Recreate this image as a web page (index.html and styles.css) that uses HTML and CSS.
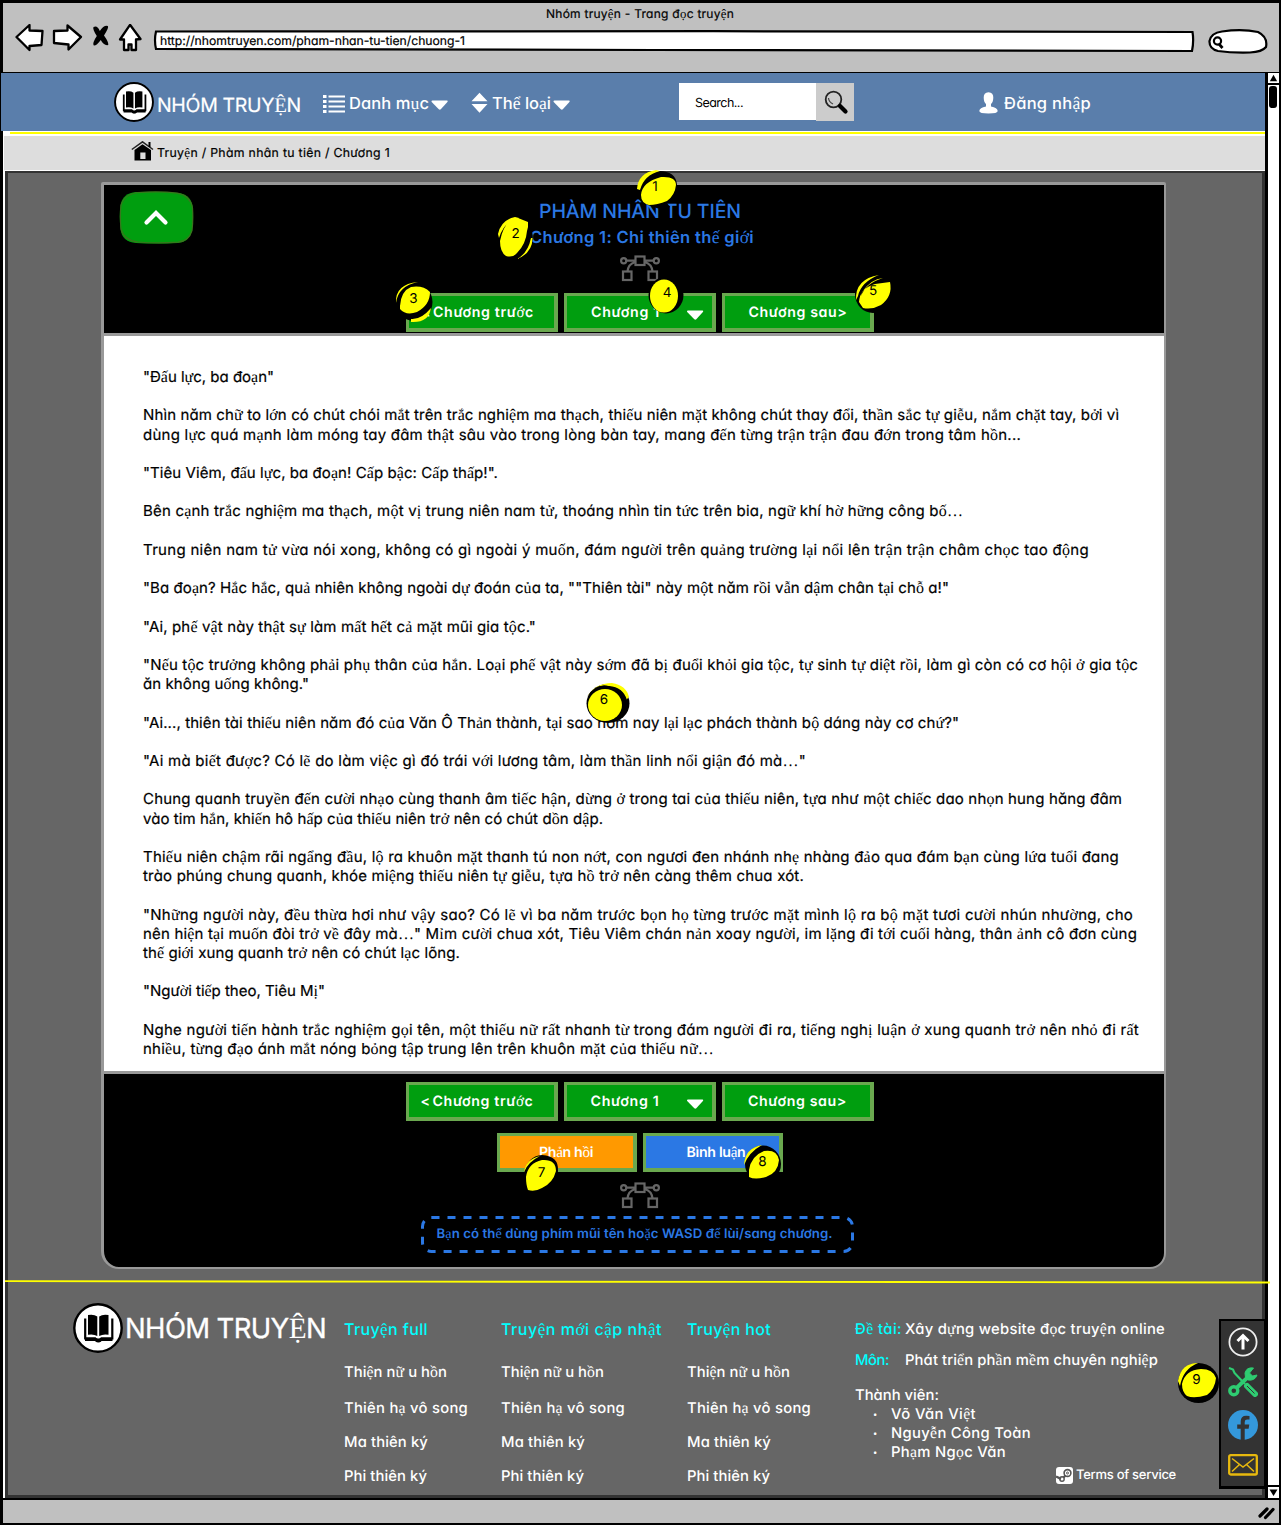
FILE: index.html
```html
<!DOCTYPE html>
<html lang="vi">
<head>
<meta charset="utf-8">
<title>Nhóm truyện - Trang đọc truyện</title>
<link rel="stylesheet" href="styles.css">
</head>
<body>
<svg class="defs" aria-hidden="true">
  <symbol id="book" viewBox="0 0 50 50"><circle cx="25" cy="25" r="23.7" fill="#fff" stroke="#000" stroke-width="2.4"/><path d="M15 12q6-1 9.3 1.4V33q-4-2.300-9.300-1.200zM35.500 12q-6-1-9.300 1.400V33q4-2.300 9.300-1.200z"/><path d="M12.200 15.500V35.500H22q1 2.500 3.300 2.500t3.300-2.500H39.300V15.500" fill="none" stroke="#000" stroke-width="2.200"/><path d="M12 34.500h10.500q2.800 2.200 5.600 0H39.500v3.500H28.500q-3.200 3-6.300 0H12z"/></symbol>
  <symbol id="bezier" viewBox="0 0 40 27"><g fill="none" stroke="#666" stroke-width="2.200"><rect x="15.500" y="1.500" width="9" height="8.500"/><rect x="3" y="16.500" width="8.500" height="8.500"/><rect x="28.500" y="16.500" width="8.500" height="8.500"/><circle cx="3.700" cy="5.700" r="2.600"/><circle cx="36.300" cy="5.700" r="2.600"/><path d="M6.500 5.700h9M24.500 5.700h9M15.500 7Q8 9 7.500 16.500M24.500 7Q32 9 32.500 16.500"/></g></symbol>
  <symbol id="caret" viewBox="0 0 17 10"><path d="M1.500.5H16q1.200.3.400 1.500L9.800 9.200q-1 .9-2 0L.7 2Q0 .8 1.500.5z" fill="#fff"/></symbol>
</svg>

<div class="window">
  <header class="chrome">
    <div class="chrome-title"><span data-w="188">Nhóm truyện - Trang đọc truyện</span></div>
    <div class="chrome-bar">
      <svg class="chrome-icons" viewBox="0 0 128 30" width="128" height="30"><g fill="#fff" stroke="#000" stroke-width="2.300" stroke-linejoin="round"><path d="M1.500 13 14.500 1v5.500l13 .5-1 14-12 1v4z"/><path d="M39 7l13.500-.5V1.500L66 13 53.500 25.500V20.500L39 19z"/><path d="M115 .8 125.500 15l-4.500.5V26h-4.500v-5.500h-3V26h-4.500V15.500h-4z"/></g><path d="M78.500 3q4-2 6.300 4 4-6 8-5 1.500 1-3.800 9.500 5 7 4.300 9.500-4.500 1-7.500-5-4.500 6-7 5.500-2-2 3-9.500-4.500-7-3.300-9z"/></svg>
      <div class="url"><svg class="url-frame" viewBox="0 0 1042 23" preserveAspectRatio="none"><path d="M3 1.500 560 1.200 1039.500 2Q1041 11 1039 21L500 20 3 19Q1 10 3 1.500z" fill="#fff" stroke="#000" stroke-width="2.200"/></svg><span data-w="305">http://nhomtruyen.com/pham-nhan-tu-tien/chuong-1</span></div>
      <svg class="chrome-search" viewBox="0 0 60 26" width="60" height="26"><path d="M14 2.500Q34-.5 50 3q10 5 8 15-4 5-16 5.500-18 .5-32-1.500Q1 20 1.500 12 3 4 14 2.500z" fill="#fff" stroke="#000" stroke-width="2.200"/><circle cx="9.500" cy="12" r="3.600" fill="none" stroke="#000" stroke-width="2.200"/><path d="M11 15l3.500 4" stroke="#000" stroke-width="2.800"/></svg>
    </div>
  </header>

  <div class="viewport">
    <main class="page">
      <nav class="nav">
        <svg class="nav-logo" width="40" height="40" preserveAspectRatio="none"><use href="#book"/></svg>
        <span class="brand" data-w="144">NHÓM TRUYỆN</span>
        <svg class="nav-list" width="22" height="20" viewBox="0 0 22 20"><path d="M0 2.500h3.500M0 7.500h3.500M0 12.500h3.500M0 17.500h3.500" stroke="#fff" stroke-width="3"/><path d="M5.500 2.500H22M5.500 7.500H22M5.500 12.500H22M5.500 17.500H22" stroke="#fff" stroke-width="1.800"/></svg>
        <span class="nav-link" data-w="80">Danh mục</span>
        <svg class="nav-caret" width="17" height="10"><use href="#caret"/></svg>
        <svg class="nav-sort" width="17" height="22" viewBox="0 0 17 22"><path d="M8.500.8 16.500 9.300H.5zM.5 12h16L8.500 20.700z" fill="#fff"/></svg>
        <span class="nav-link" data-w="59">Thể loại</span>
        <svg class="nav-caret" width="17" height="10"><use href="#caret"/></svg>
        <div class="search"><span data-w="48">Search...</span></div>
        <div class="search-btn"><svg width="26" height="26" viewBox="0 0 26 26"><circle cx="10.500" cy="10.500" r="7.800" fill="#ccc" stroke="#222" stroke-width="1.800"/><path d="M5.500 9q.3 4 4.500 6" fill="none" stroke="#444" stroke-width="1.200"/><path d="M17 17l5.500 5.500" stroke="#000" stroke-width="4.200" stroke-linecap="round"/></svg></div>
        <svg class="nav-user" width="19" height="22" viewBox="0 0 19 22"><path d="M9.500.3q5 .2 4.800 5.500-.2 4.700-2.300 6.200v2.500q6.500 1.300 6.700 4.500 0 2.500-9.200 2.500T.3 19q.2-3.200 6.700-4.500V12Q4.900 10.500 4.700 5.800 4.500.5 9.500.3z" fill="#fff"/></svg>
        <span class="nav-link" data-w="87">Đăng nhập</span>
      </nav>
      <div class="rule"></div>
      <div class="crumbs">
        <svg width="23" height="20" viewBox="0 0 23 20"><path d="M3.500 9 11.500 3.200 20 9v10.500H3.500z"/><path d="M9.300 11.500h5.200v6.500H9.300z" fill="#ddd"/><path d="M.8 8.500 11.500.8 22 8.500" fill="none" stroke="#222" stroke-width="1.500"/><path d="M18.500 1v5" stroke="#000" stroke-width="2"/></svg>
        <span data-w="233">Truyện / Phàm nhân tu tiên / Chương 1</span>
      </div>

      <div class="body">
        <section class="reader">
          <div class="head">
            <svg class="up" width="75" height="53" viewBox="0 0 75 53"><path d="M17 1Q38 0 60 2 73 4 74 18q.5 12-1 22-3 11-14 12-24 1-42 0Q3 51 1.500 38 0 24 1.500 14 4 2 17 1z" fill="#009e0f"/><path d="M20 1.500q22-1.500 38 .7 13 2 15.500 14.800.8 12-.5 22.500-3 10.500-14 11.700-21 1.500-40-.2Q5 49.500 2 38 .8 25 2 14.500 5 3 20 1.500z" fill="none" stroke="#38761d" stroke-width="1.200"/><path d="M27.500 31.500 37 22l9.500 9.500" fill="none" stroke="#fff" stroke-width="4.200" stroke-linecap="round"/></svg>
            <div class="titles">
              <h1><span data-w="202">PHÀM NHÂN TU TIÊN</span></h1>
              <h2><span data-w="224">Chương 1: Chi thiên thế giới</span></h2>
              <svg class="deco" width="40" height="27"><use href="#bezier"/></svg>
              <div class="buttons">
                <a class="btn prev"><span data-w="11">&lt;</span><span data-w="101">Chương trước</span></a>
                <a class="btn pick"><span data-w="69">Chương 1</span><svg width="18" height="10"><use href="#caret"/></svg></a>
                <a class="btn next"><span data-w="99">Chương sau&gt;</span></a>
              </div>
            </div>
          </div>
          <article class="text">
            <p><span data-w="131">"Đấu lực, ba đoạn"</span></p>
            <p><span data-w="976">Nhìn năm chữ to lớn có chút chói mắt trên trắc nghiệm ma thạch, thiếu niên mặt không chút thay đổi, thần sắc tự giễu, nắm chặt tay, bởi vì</span><br><span data-w="878">dùng lực quá mạnh làm móng tay đâm thật sâu vào trong lòng bàn tay, mang đến từng trận trận đau đớn trong tâm hồn...</span></p>
            <p><span data-w="355">"Tiêu Viêm, đấu lực, ba đoạn! Cấp bậc: Cấp thấp!".</span></p>
            <p><span data-w="820">Bên cạnh trắc nghiệm ma thạch, một vị trung niên nam tử, thoáng nhìn tin tức trên bia, ngữ khí hờ hững công bố…</span></p>
            <p><span data-w="946">Trung niên nam tử vừa nói xong, không có gì ngoài ý muốn, đám người trên quảng trường lại nổi lên trận trận châm chọc tao động</span></p>
            <p><span data-w="806">"Ba đoạn? Hắc hắc, quả nhiên không ngoài dự đoán của ta, ""Thiên tài" này một năm rồi vẫn dậm chân tại chỗ a!"</span></p>
            <p><span data-w="393">"Ai, phế vật này thật sự làm mất hết cả mặt mũi gia tộc."</span></p>
            <p><span data-w="995">"Nếu tộc trưởng không phải phụ thân của hắn. Loại phế vật này sớm đã bị đuổi khỏi gia tộc, tự sinh tự diệt rồi, làm gì còn có cơ hội ở gia tộc</span><br><span data-w="166">ăn không uống không."</span></p>
            <p><span data-w="816">"Ai..., thiên tài thiếu niên năm đó của Văn Ô Thản thành, tại sao hôm nay lại lạc phách thành bộ dáng này cơ chứ?"</span></p>
            <p><span data-w="663">"Ai mà biết được? Có lẽ do làm việc gì đó trái với lương tâm, làm thần linh nổi giận đó mà…"</span></p>
            <p><span data-w="979">Chung quanh truyền đến cười nhạo cùng thanh âm tiếc hận, dừng ở trong tai của thiếu niên, tựa như một chiếc dao nhọn hung hăng đâm</span><br><span data-w="460">vào tim hắn, khiến hô hấp của thiếu niên trở nên có chút dồn dập.</span></p>
            <p><span data-w="976">Thiếu niên chậm rãi ngẩng đầu, lộ ra khuôn mặt thanh tú non nớt, con ngươi đen nhánh nhẹ nhàng đảo qua đám bạn cùng lứa tuổi đang</span><br><span data-w="661">trào phúng chung quanh, khóe miệng thiếu niên tự giễu, tựa hồ trở nên càng thêm chua xót.</span></p>
            <p><span data-w="990">"Những người này, đều thừa hơi như vậy sao? Có lẽ vì ba năm trước bọn họ từng trước mặt mình lộ ra bộ mặt tươi cười nhún nhường, cho</span><br><span data-w="994">nên hiện tại muốn đòi trở về đây mà…" Mỉm cười chua xót, Tiêu Viêm chán nản xoay người, im lặng đi tới cuối hàng, thân ảnh cô đơn cùng</span><br><span data-w="317">thế giới xung quanh trở nên có chút lạc lõng.</span></p>
            <p><span data-w="182">"Người tiếp theo, Tiêu Mị"</span></p>
            <p><span data-w="996">Nghe người tiến hành trắc nghiệm gọi tên, một thiếu nữ rất nhanh từ trong đám người đi ra, tiếng nghị luận ở xung quanh trở nên nhỏ đi rất</span><br><span data-w="571">nhiều, từng đạo ánh mắt nóng bỏng tập trung lên trên khuôn mặt của thiếu nữ…</span></p>
          </article>
          <div class="foot">
            <div class="buttons">
              <a class="btn prev"><span data-w="11">&lt;</span><span data-w="101">Chương trước</span></a>
              <a class="btn pick"><span data-w="69">Chương 1</span><svg width="18" height="10"><use href="#caret"/></svg></a>
              <a class="btn next"><span data-w="99">Chương sau&gt;</span></a>
            </div>
            <div class="buttons second">
              <a class="btn report"><span data-w="54">Phản hồi</span></a>
              <a class="btn comment"><span data-w="59">Bình luận</span></a>
            </div>
            <svg class="deco" width="40" height="27"><use href="#bezier"/></svg>
            <div class="hint"><svg class="hint-frame" viewBox="0 0 433 37" width="433" height="37"><rect x="1.500" y="1.500" width="430" height="34" rx="9" fill="none" stroke="#2b78e4" stroke-width="3" stroke-dasharray="8 8"/></svg><span data-w="396">Bạn có thể dùng phím mũi tên hoặc WASD để lùi/sang chương.</span></div>
          </div>
        </section>

        <svg class="footline" viewBox="0 0 1265 4" width="1265" height="4"><path d="M0 1.200 400 1.700 900 2 1265 2.500" stroke="#ff0" stroke-width="1.800" fill="none"/></svg>
        <footer class="footer">
          <div class="f-brand"><svg width="50" height="50"><use href="#book"/></svg><span data-w="201">NHÓM TRUYỆN</span></div>
          <ul class="col c1"><li><b data-w="84">Truyện full</b></li><li><span data-w="103">Thiện nữ u hồn</span></li><li><span data-w="124">Thiên hạ vô song</span></li><li><span data-w="84">Ma thiên ký</span></li><li><span data-w="83">Phi thiên ký</span></li></ul>
          <ul class="col c2"><li><b data-w="161">Truyện mới cập nhật</b></li><li><span data-w="103">Thiện nữ u hồn</span></li><li><span data-w="124">Thiên hạ vô song</span></li><li><span data-w="84">Ma thiên ký</span></li><li><span data-w="83">Phi thiên ký</span></li></ul>
          <ul class="col c3"><li><b data-w="84">Truyện hot</b></li><li><span data-w="103">Thiện nữ u hồn</span></li><li><span data-w="124">Thiên hạ vô song</span></li><li><span data-w="84">Ma thiên ký</span></li><li><span data-w="83">Phi thiên ký</span></li></ul>
          <div class="about">
            <div class="line"><b><span data-w="47">Đề tài:</span></b><span data-w="260">Xây dựng website đọc truyện online</span></div>
            <div class="line"><b><span data-w="34">Môn:</span></b><span data-w="253">Phát triển phần mềm chuyên nghiệp</span></div>
            <div class="members"><span data-w="84">Thành viên:</span>
              <ul><li><span data-w="85">Võ Văn Việt</span></li><li><span data-w="140">Nguyễn Công Toàn</span></li><li><span data-w="115">Phạm Ngọc Văn</span></li></ul>
            </div>
            <div class="terms"><svg width="17" height="17" viewBox="0 0 17 17"><rect width="17" height="17" rx="3" fill="#fff"/><g fill="none" stroke="#555"><circle cx="11.500" cy="6" r="3.400" stroke-width="1.600"/><circle cx="11.500" cy="6" r="1" stroke-width="1"/><circle cx="6" cy="12" r="2.200" stroke-width="1.400"/><path d="M0 9.500l5 2.300M7.500 10.500l2-2" stroke-width="2.400"/></g></svg><span data-w="100">Terms of service</span></div>
          </div>
        </footer>
      </div>
    </main>
    <div class="scroll">
      <svg class="arrow" width="11" height="11" viewBox="0 0 11 11"><path d="M5.500 2 9.500 9H1.500z"/></svg>
      <div class="thumb"></div>
      <svg class="arrow last" width="11" height="11" viewBox="0 0 11 11"><path d="M5.500 9 9.500 2.500H1.500z"/></svg>
    </div>
  </div>
  <div class="status"><svg width="17" height="14" viewBox="0 0 17 14"><path d="M2 10 9 3M7.500 11.500 15 3.500" stroke="#000" stroke-width="3.200" stroke-linecap="round"/></svg></div>
</div>

<aside class="tools">
  <svg width="30" height="30" viewBox="0 0 30 30"><circle cx="15" cy="15" r="13.600" fill="none" stroke="#eee" stroke-width="1.800"/><path d="M15 22.500V9M9.500 14 15 8.500 20.500 14" fill="none" stroke="#fff" stroke-width="3"/></svg>
  <svg width="30" height="30" viewBox="0 0 30 30" fill="none" stroke="#2ecc71"><path d="M1 1l4 1.500 1.500 3.500L17 17" stroke-width="2.200"/><path d="M19 19l8 8" stroke-width="6" stroke-linecap="round"/><path d="M19 19l7.500 7.500" stroke="#333" stroke-width="1"/><circle cx="5.800" cy="23.800" r="4" stroke-width="3.400"/><path d="M9 20.500 19 11" stroke-width="3.800"/><path d="M25.500 1q-7-1-8.500 5l.5 4.500L20 13q7 1 9-5l-4.500 1-3-3z" fill="#2ecc71" stroke-width="1"/></svg>
  <svg width="30" height="30" viewBox="0 0 30 30"><circle cx="15" cy="15" r="15" fill="#3498db"/><path d="M12.700 30V18.800H9.200v-4.300h3.500v-3.200q0-5.600 5.500-5.600 2 0 3.300.3v3.600h-2.300q-2.500 0-2.500 2.300v2.600h4.600l-.7 4.300h-3.900V30z" fill="#333"/></svg>
  <svg width="30" height="22" viewBox="0 0 30 22" fill="none" stroke="#e8b90e"><rect x="1.200" y="1.200" width="27.600" height="19.300" rx="1.500" stroke-width="2.300"/><path d="M4 4.500 15 13 26 4.500M4 17.500l7.500-7M26 17.500l-7.500-7" stroke-width="1.500"/></svg>
</aside>

<svg class="pins" viewBox="0 0 1281 1526" width="1281" height="1526">
  <g fill="#000">
    <path d="M638 190q2-17 21-19 17 0 18 14-1 10-10 18l3 4q-10 3-16 0-15-3-16-17z"/>
    <ellipse cx="515" cy="239" rx="17.500" ry="21" transform="rotate(15 515 239)"/>
    <ellipse cx="414" cy="302" rx="18.500" ry="19"/><ellipse cx="666" cy="295" rx="17.500" ry="18.500"/>
    <ellipse cx="873" cy="294" rx="18" ry="19"/><ellipse cx="608" cy="703.500" rx="21.500" ry="19.500"/>
    <path d="M524 1174q3-18 18-19 17 1 16 16-1 18-12 24-12 0-20-6-3-7-2-15z"/>
    <ellipse cx="763" cy="1164" rx="18" ry="18.500"/><ellipse cx="1198.500" cy="1383" rx="20.500" ry="20"/>
  </g>
  <g fill="#ff0">
    <path d="M637 189q1-16 19-19l4 1q-16 4-20 19zM641 195q1-13 20-18 15-1 15 8-1 10-9 16-10 4-18 4-8-2-8-10z"/>
    <path d="M498 234q3-14 17-17l4 1q-15 3-20 20zM500 241q4-21 18-23l10 4v5l-1 4q-1 13-10 22-4 5-11 3-6-4-6-15zM532.500 238q0 15-15.500 21 11-6 14-21z"/>
    <path d="M396 303q-1-19 22-21-20 4-22 21zM400 306q1-15 11-19 12-2 19 5 0 13-13 20-11 4-17-3zM411 319q10 1 20-11-2 15-20 14z"/>
    <ellipse cx="664" cy="296" rx="14" ry="16.500"/>
    <path d="M856 300q-1-21 23-25-18 7-21 21zM859 302q1-14 16-18l15-2q3 14-9 23-9 5-18 3zM861 296q5-13 22-18-12 1-21 14z"/>
    <path d="M587 697q8-14 25-14 14 2 17 14l-5 5-8-13q-18-10-29 8z"/>
    <path d="M587 697Q595 683 609 686q14 1 18 14l-5 9-7-18q-17-8-28 6z" fill="#000"/>
    <ellipse cx="605" cy="705" rx="17" ry="16"/>
    <path d="M524 1172q2-13 16-16-12 6-16 16zM526 1177q2-14 16-17 14-1 14 11-3 12-14 17-7 4-14 2-2-5-2-13z"/>
    <path d="M744 1165q1-17 18-20-13 7-18 20zM749 1170q2-14 15-19 13-2 15 9-1 13-13 17-11 3-17 0z"/>
    <path d="M1178 1381q3-18 20-18-15 6-18 23zM1182 1384q3-14 19-15 12 0 15 9-1 11-9 17-13 4-20 1-5-4-5-12z"/>
  </g>
  <g class="nums"><text x="655" y="191">1</text><text x="515.500" y="238">2</text><text x="413.500" y="303">3</text><text x="667" y="297">4</text><text x="873" y="295">5</text><text x="604" y="704">6</text><text x="541.500" y="1176.500">7</text><text x="762.500" y="1166">8</text><text x="1196.500" y="1383.500">9</text></g>
</svg>
<script src="fit.js"></script>
</body>
</html>
```
FILE: styles.css
```css
* { box-sizing: border-box; }
body { margin: 0; width: 1281px; height: 1526px; position: relative; overflow: hidden; background: #fff; color: #000; font-family: Inter, "Liberation Sans", sans-serif; font-feature-settings: "cv11" 1, "calt" 0; font-size: 15px; text-rendering: geometricPrecision; }
svg { display: block; flex: none; }
.defs { position: absolute; width: 0; height: 0; }
h1, h2, p, ul { margin: 0; padding: 0; }
ul { list-style: none; }
[data-w] { display: inline-block; white-space: nowrap; }
.alt { font-family: "Liberation Serif", serif; font-size: 1.067em; font-weight: 400; line-height: 0; }

.window { height: 1525px; display: flex; flex-direction: column; border: solid #000; border-width: 3px 2px 2px 3px; background: #fff; }
.chrome { height: 70px; background: #c0c0c0; border-bottom: 1px solid #000; flex: none; -webkit-text-stroke: .2px; }
.chrome-title { height: 21px; line-height: 21px; text-align: center; font-size: 12px; padding-right: 2px; }
.chrome-bar { display: flex; align-items: flex-start; padding-left: 12px; }
.url { position: relative; width: 1042px; height: 22px; margin: 6px 13px 0 10px; padding-left: 7px; line-height: 21px; font-size: 12.200px; }
.url-frame { position: absolute; left: 0; top: 0; width: 1042px; height: 23px; }
.url span { position: relative; }
.chrome-search { margin-top: 5px; }

.viewport { flex: 1; display: flex; min-height: 0; }
.page { flex: 1; display: flex; flex-direction: column; min-width: 0; padding-left: 2px; }
.nav, .rule, .crumbs { flex: none; }
.nav { height: 58px; margin-left: -4px; padding: 9px 0 0 113px; display: flex; background: #5a7eab; color: #fff; font-size: 16.500px; font-weight: 500; }
.nav > span { line-height: 43px; }
.nav .brand { font-size: 19.500px; font-weight: 400; -webkit-text-stroke: .2px; margin-left: 3px; line-height: 46px; }
.nav-list { margin: 12px 4px 0 22px; }
.nav-caret { margin: 18px 0 0 2px; }
.nav-sort { margin: 10px 4px 0 23px; }
.search { width: 137px; height: 37px; margin: 1px 0 0 109px; padding-left: 16px; background: #fff; color: #000; font-size: 12.500px; line-height: 41px; font-weight: 400; }
.search-btn { width: 38px; height: 38px; margin-top: 1px; background: #ccc; padding: 6px 0 0 7px; }
.nav-user { margin: 10px 6px 0 125px; }
.rule { height: 2px; margin-top: 1px; background: #ff0; margin-left: 5px; }
.crumbs { height: 34px; margin: 2px 0 1px -1px; background: #ddd; display: flex; padding: 5px 0 0 127px; font-size: 12.300px; line-height: 23px; -webkit-text-stroke: .2px; }
.crumbs > span { margin-left: 3px; }

.body { flex: 1; min-height: 0; background: #666; border: 3px solid #333; border-top-width: 2px; display: flex; flex-direction: column; }
.reader { flex: none; margin: 9px 0 0 93px; width: 1065px; height: 1087px; border: solid #999; border-width: 3px 2px 2px 3px; border-radius: 2px 2px 16px 18px; background: #000; display: flex; flex-direction: column; }
.head { height: 148px; display: flex; }
.up { margin: 6px 0 0 15px; }
.titles { width: 892px; display: flex; flex-direction: column; align-items: center; color: #2b78e4; }
h1 { font-size: 19.500px; line-height: 26px; margin-top: 13px; font-weight: 500; }
h2 { font-size: 16.500px; line-height: 26px; font-weight: 600; padding-left: 4px; }
.deco { margin-top: 5px; }
.buttons { display: flex; gap: 6px; margin-top: 11px; }
.btn { width: 152px; height: 39px; border: solid #6aa84f; border-width: 3px 4px 4px 3px; background: #009e0f; color: #fff; font-weight: 600; font-size: 14.200px; line-height: 34px; display: flex; justify-content: center; }
.prev { justify-content: flex-start; padding-left: 12px; }
.prev span + span { margin-left: 1px; }
.pick { justify-content: flex-start; padding-left: 24px; }
.pick svg { margin: 14px 0 0 26px; }
.next { padding-left: 1px; }
.text { height: 741px; background: #fff; border-top: 3px solid #999; border-bottom: 3px solid #999; padding: 31px 0 0 39px; font-size: 15px; -webkit-text-stroke: .2px; line-height: 19.200px; white-space: nowrap; }
.text p { margin-bottom: 19.200px; }
.text [data-w] { vertical-align: top; }
.foot { display: flex; flex-direction: column; align-items: center; padding-left: 11px; }
.foot .buttons { margin-top: 8px; }
.foot .second { margin-top: 12px; }
.second .btn { width: 140px; }
.second .report { background: #f90; }
.second .comment { background: #2b78e4; padding-left: 8px; }
.foot .deco { margin-top: 10px; }
.hint { position: relative; width: 433px; height: 37px; margin: 7px 5px 0 0; padding-left: 16px; line-height: 36px; color: #2b78e4; font-weight: 600; font-size: 13.200px; }
.hint-frame { position: absolute; left: 0; top: 0; }

.footline { margin: 11px 0 0 -3px; overflow: visible; position: relative; }
.footer { display: flex; color: #fff; font-weight: 500; font-size: 14.800px; }
.f-brand { width: 271px; margin: 19px 0 0 65px; display: flex; height: 50px; line-height: 50px; font-size: 27.500px; font-weight: 400; -webkit-text-stroke: .3px; }
.f-brand > span { margin-left: 2px; }
.col { padding-top: 32px; }
.col li { height: 34px; line-height: 26px; }
.col li:first-child { height: 43px; }
.col li:nth-child(2) { height: 36px; }
.col b, .about b { color: #0ff; font-weight: 500; }
.col b { font-size: 16px; }
.c1 { width: 157px; }
.c2 { width: 186px; }
.c3 { width: 168px; }
.about { padding-top: 34px; width: 330px; }
.line { display: flex; height: 31px; line-height: 22px; }
.line b { width: 50px; }
.members { line-height: 19.100px; margin-top: 6px; }
.members > span { display: block; }
.members li { padding-left: 36px; display: flex; }
.members li::before { content: "•"; font-size: 8px; width: 18px; margin-left: -18px; }
.terms { display: flex; margin: 5px 0 0 201px; font-size: 13px; line-height: 17px; gap: 3px; }

.scroll { width: 14px; background: #fff; border-left: 3px solid #000; display: flex; flex-direction: column; }
.arrow { border-bottom: 2px solid #000; height: 12px; }
.thumb { width: 8px; height: 22px; margin: 1px 0 0 1px; border-radius: 3px; background: #000; }
.last { margin-top: auto; border-top: 2px solid #000; border-bottom: 0; height: 13px; }
.status { flex: none; height: 25px; background: #c0c0c0; border-top: 2px solid #000; display: flex; justify-content: flex-end; padding: 6px 4px 0 0; }

.tools { position: absolute; left: 1219px; top: 1319px; width: 48px; height: 170px; background: #333; border: solid #000; border-width: 2px 3px 3px 2px; display: flex; flex-direction: column; align-items: center; padding: 6px 0 0 1px; }
.tools svg { margin-bottom: 10px; }
.tools svg:nth-child(2) { margin-bottom: 13px; }
.tools svg:nth-child(3) { margin-bottom: 14px; }
.pins { position: absolute; left: 0; top: 0; }
.nums text { font-size: 13.500px; text-anchor: middle; }
.alt { -webkit-text-stroke: 0; }
```
FILE: fit.js
```js
// Vietnamese letters with stacked marks are set in the serif face, then each run is tracked to its width.
document.querySelectorAll('[data-w]').forEach(function (el) {
  el.innerHTML = el.innerHTML.replace(/[\u1EA0-\u1EF9\u2026]/g, '<span class="alt">$&</span>');
  el.style.width = 'max-content';
  var target = +el.dataset.w;
  var gap = (target - el.getBoundingClientRect().width) / el.textContent.length;
  el.style.letterSpacing = gap.toFixed(3) + 'px';
  el.style.width = target + 'px';
});
```
